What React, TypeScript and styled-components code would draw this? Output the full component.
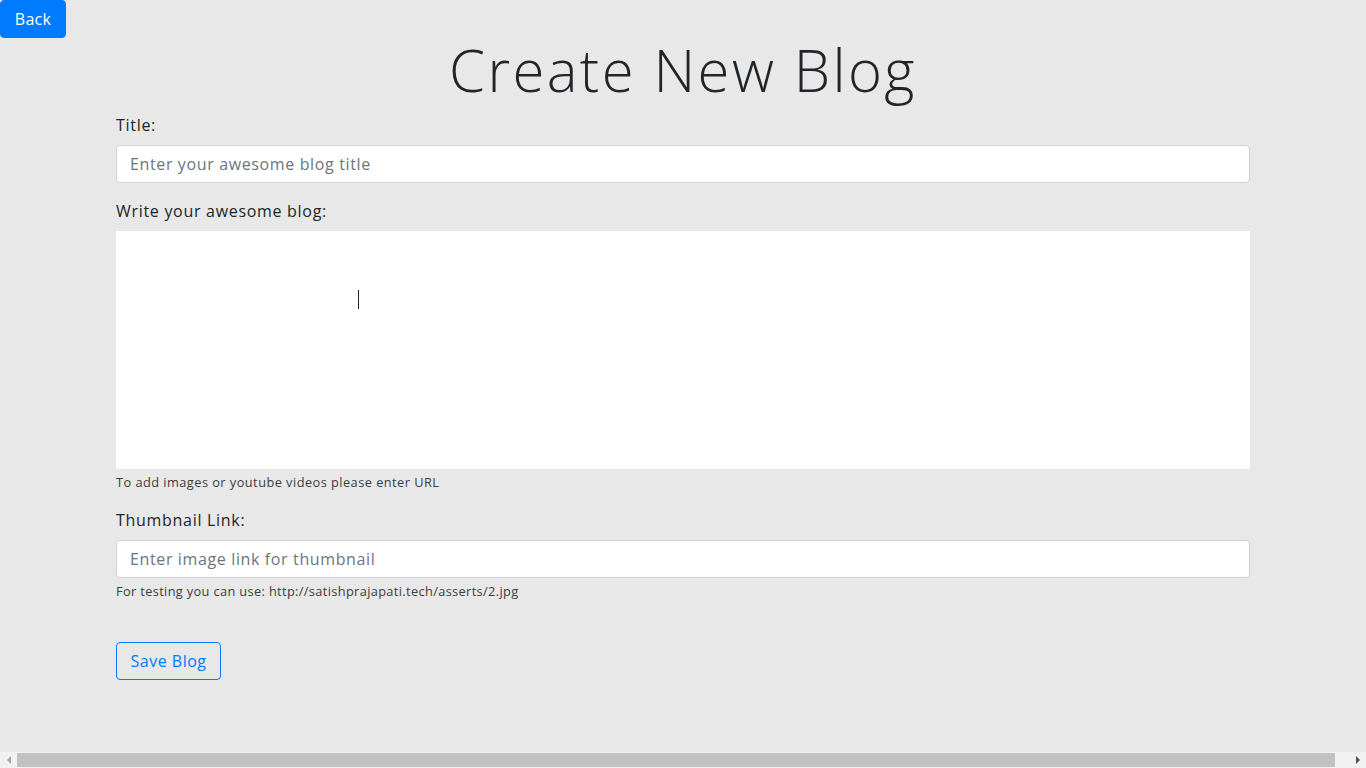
import React from "react";
import styled, { createGlobalStyle } from "styled-components";

const Global = createGlobalStyle`
  html, body { margin: 0; padding: 0; }
  body {
    background: #e8e8e8;
    font-family: "Open Sans", "Liberation Sans", sans-serif;
    color: #212529;
    font-size: 16px;
    line-height: 1.5;
  }
  * { box-sizing: border-box; }
`;

const Page = styled.div`
  min-height: 751px;
`;

const BackButton = styled.button`
  display: block;
  height: 38px;
  width: 66px;
  padding: 0;
  border: 1px solid #007bff;
  border-radius: 4px;
  background: #007bff;
  color: #fff;
  font-family: inherit;
  font-size: 16px;
  letter-spacing: 0.3px;
  line-height: 1.5;
  cursor: pointer;
`;

const Container = styled.div`
  width: 1134px;
  margin: 0 auto;
`;

const Heading = styled.h1`
  margin: 0 0 8px;
  height: 67px;
  text-align: center;
  font-size: 58px;
  font-weight: 300;
  line-height: 64px;
  padding-bottom: 3px;
  letter-spacing: 2.4px;
  color: #212529;
`;

const FormGroup = styled.div`
  margin-bottom: 16px;
`;

const Label = styled.label`
  display: block;
  margin-bottom: 8px;
  height: 24px;
  font-size: 16px;
  line-height: 24px;
  letter-spacing: 0.7px;
`;

const Input = styled.input`
  display: block;
  width: 100%;
  height: 38px;
  padding: 6px 13px;
  border: 1px solid #ced4da;
  border-radius: 4px;
  background: #fff;
  font-family: inherit;
  font-size: 16px;
  letter-spacing: 0.63px;
  color: #495057;
  outline: none;
  &::placeholder { color: #6c757d; }
`;

const Editor = styled.div`
  position: relative;
  height: 238px;
  background: #fff;
`;

const Caret = styled.span`
  position: absolute;
  left: 242px;
  top: 59px;
  width: 1px;
  height: 19px;
  background: #222;
`;

const Hint = styled.small<{ $tight?: boolean }>`
  display: block;
  margin-top: 4px;
  font-size: 12.8px;
  line-height: 19.2px;
  letter-spacing: ${(p) => (p.$tight ? "0.35px" : "0.45px")};
  color: #3d3d3d;
`;

const SaveButton = styled.button`
  display: block;
  margin-top: 41px;
  height: 38px;
  width: 105px;
  padding: 0;
  border: 1px solid #007bff;
  border-radius: 4px;
  background: transparent;
  color: #007bff;
  font-family: inherit;
  font-size: 16px;
  letter-spacing: 0.5px;
  cursor: pointer;
`;

const ScrollBar = styled.div`
  position: fixed;
  left: 0;
  right: 0;
  bottom: 0;
  height: 16px;
  display: flex;
  align-items: center;
  background: #f1f1f1;
`;

const ScrollArrow = styled.div<{ $dir: "left" | "right"; $active?: boolean }>`
  width: 17px;
  height: 16px;
  display: flex;
  align-items: center;
  justify-content: center;
  &::before {
    content: "";
    width: 0;
    height: 0;
    border-top: 4px solid transparent;
    border-bottom: 4px solid transparent;
    ${(p) =>
      p.$dir === "left"
        ? `border-right: 4px solid ${p.$active ? "#505050" : "#a3a3a3"};`
        : `border-left: 4px solid ${p.$active ? "#505050" : "#a3a3a3"};`}
  }
`;

const ScrollTrack = styled.div`
  flex: 1;
  height: 16px;
  display: flex;
  align-items: center;
  padding-right: 14px;
`;

const ScrollThumb = styled.div`
  flex: 1;
  height: 14px;
  background: #c1c1c1;
`;

export default function App() {
  return (
    <Page>
      <Global />
      <BackButton>Back</BackButton>
      <Container>
        <Heading>Create New Blog</Heading>
        <FormGroup>
          <Label>Title:</Label>
          <Input placeholder="Enter your awesome blog title" />
        </FormGroup>
        <FormGroup>
          <Label>Write your awesome blog:</Label>
          <Editor>
            <Caret />
          </Editor>
          <Hint>To add images or youtube videos please enter URL</Hint>
        </FormGroup>
        <FormGroup>
          <Label>Thumbnail Link:</Label>
          <Input placeholder="Enter image link for thumbnail" />
          <Hint $tight>For testing you can use: http://satishprajapati.tech/asserts/2.jpg</Hint>
        </FormGroup>
        <SaveButton>Save Blog</SaveButton>
      </Container>
      <ScrollBar>
        <ScrollArrow $dir="left" />
        <ScrollTrack>
          <ScrollThumb />
        </ScrollTrack>
        <ScrollArrow $dir="right" $active />
      </ScrollBar>
    </Page>
  );
}
